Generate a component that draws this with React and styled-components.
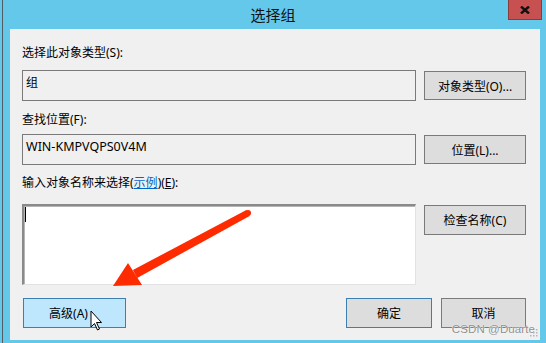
import React from 'react';
import styled, { createGlobalStyle } from "styled-components"

const GlobalStyle = createGlobalStyle`
  html, body {
    margin: 0;
    padding: 0;
    background: #63c8ea;
  }
  body {
    font-family: "Noto Sans", "Noto Sans CJK SC", sans-serif;
    font-size: 12px;
    color: #000;
  }
`

const Window = styled.div`
  position: relative;
  width: 546px;
  height: 343px;
  background: #63c8ea;
  box-shadow: inset 2px 0 0 #63c8ea, inset 3px 0 0 #4d5d63;
  display: flex;
  flex-direction: column;
  overflow: hidden;
`

const TitleBar = styled.div`
  height: 29px;
  display: flex;
  align-items: flex-start;
`

const Title = styled.div`
  flex: 1;
  padding-left: 38px;
  text-align: center;
  font-family: "Noto Sans CJK SC", sans-serif;
  font-size: 15px;
  line-height: 30px;
  color: #111;
`

const CloseButton = styled.div`
  width: 32px;
  height: 19px;
  margin-right: 4px;
  background: #c75050;
  border: 1px solid #8c3b3b;
  border-top: none;
  display: flex;
  align-items: center;
  justify-content: center;
`

const Client = styled.div`
  position: relative;
  margin: 0 6px 0 10px;
  height: 311px;
  box-sizing: border-box;
  background: #f0f0f0;
  padding: 16px 14px 0 12px;
  display: flex;
  flex-direction: column;
`

const Label = styled.div`
  line-height: 16px;
  margin-top: ${({ $top }) => $top || 0}px;
  margin-bottom: ${({ $bottom }) => $bottom || 0}px;
  white-space: nowrap;
`

const Link = styled.span`
  color: #0066cc;
  text-decoration: underline;
`

const Key = styled.span`
  text-decoration: underline;
`

const Row = styled.div`
  display: grid;
  grid-template-columns: 394px 102px;
  column-gap: 8px;
  align-items: ${({ $align }) => $align || "center"};
`

const Field = styled.div`
  height: 31px;
  box-sizing: border-box;
  border: 1px solid #7a7a7a;
  background: #f0f0f0;
  padding: 4px 3px 0;
  line-height: 16px;
  font-size: ${({ $latin }) => ($latin ? "12.5px" : "12px")};
`

const TextArea = styled.div`
  height: 81px;
  box-sizing: border-box;
  background: #fff;
  border: 1px solid #e3e3e3;
  border-top: 2px solid #8a8a8a;
  border-left: 2px solid #8a8a8a;
  box-shadow: inset 1px 1px 0 #b4b4b4;
  padding: 1px 0 0 1px;
`

const Caret = styled.div`
  width: 1px;
  height: 15px;
  background: #000;
`

const Button = styled.div`
  height: ${({ $h }) => $h || 30}px;
  width: ${({ $w }) => ($w ? `${$w}px` : "auto")};
  box-sizing: border-box;
  border: 1px solid ${({ $variant }) => ($variant ? "#3c7fb1" : "#7a7a7a")};
  background: ${({ $variant }) => ($variant === "hot" ? "#bee6fd" : "#dddddd")};
  display: flex;
  align-items: center;
  justify-content: center;
  white-space: nowrap;
  margin-top: ${({ $top }) => $top || 0}px;
  padding-right: ${({ $shift }) => $shift || 0}px;
`

const Footer = styled.div`
  display: flex;
  align-items: center;
  gap: 9px;
  margin-top: 13px;
  padding-left: 1px;
`

const Spacer = styled.div`
  flex: 1;
`

const Overlay = styled.svg`
  position: absolute;
  left: 0;
  top: 0;
  pointer-events: none;
`

const Watermark = styled.div`
  position: absolute;
  right: 5px;
  bottom: 5px;
  font-family: "Liberation Sans", Arial, sans-serif;
  font-size: 11.5px;
  color: #8e8e8e;
  text-shadow: 0 0 1px #fff, 0 0 1px #fff;
  letter-spacing: 0.1px;
`

const Grip = styled.svg`
  position: absolute;
  right: 2px;
  bottom: 3px;
`

const App = () => {
  return (
    <>
      <GlobalStyle />
      <Window>
        <TitleBar>
          <Title>选择组</Title>
          <CloseButton>
            <svg width="10" height="8" viewBox="0 0 10 8">
              <path d="M1 0.5 L9 7.5 M9 0.5 L1 7.5" stroke="#111" strokeWidth="2.4" />
            </svg>
          </CloseButton>
        </TitleBar>
        <Client>
          <Label $bottom={9}>选择此对象类型(S):</Label>
          <Row>
            <Field>组</Field>
            <Button $h={29}>对象类型(O)...</Button>
          </Row>
          <Label $top={11} $bottom={6}>查找位置(F):</Label>
          <Row>
            <Field $latin>WIN-KMPVQPS0V4M</Field>
            <Button $h={29}>位置(L)...</Button>
          </Row>
          <Label $top={10} $bottom={13}>
            输入对象名称来选择(<Link>示例</Link>)(<Key>E</Key>):
          </Label>
          <Row $align="start">
            <TextArea>
              <Caret />
            </TextArea>
            <Button $top={1}>检查名称(C)</Button>
          </Row>
          <Footer>
            <Button $w={103} $variant="hot" $shift={12}>高级(A)</Button>
            <Spacer />
            <Button $w={86} $variant="default">确定</Button>
            <Button $w={85}>取消</Button>
          </Footer>
          <Watermark>CSDN @Duarte</Watermark>
          <Grip width="8" height="8" viewBox="0 0 8 8">
            <g fill="#b5b5b5">
              <rect x="6" y="0" width="1.5" height="1.5" />
              <rect x="3" y="3" width="1.5" height="1.5" />
              <rect x="6" y="3" width="1.5" height="1.5" />
              <rect x="0" y="6" width="1.5" height="1.5" />
              <rect x="3" y="6" width="1.5" height="1.5" />
              <rect x="6" y="6" width="1.5" height="1.5" />
            </g>
          </Grip>
        </Client>
        <Overlay width="546" height="343" viewBox="0 0 546 343">
          <polygon
            points="249.6,216 246.4,210 132.9,270 137.1,278"
            fill="#fe2a00"
          />
          <circle cx="248" cy="213" r="3" fill="#fe2a00" />
          <polygon points="113,286 128,263 142,285" fill="#fe2a00" />
          <path
            d="M91 311 L91 327 L94.5 323.5 L97.5 330 L99.5 329 L96.5 322.5 L101.5 322.5 Z"
            fill="#fff"
            stroke="#000"
            strokeWidth="1"
            strokeLinejoin="miter"
          />
        </Overlay>
      </Window>
    </>
  );
};

export default App;
